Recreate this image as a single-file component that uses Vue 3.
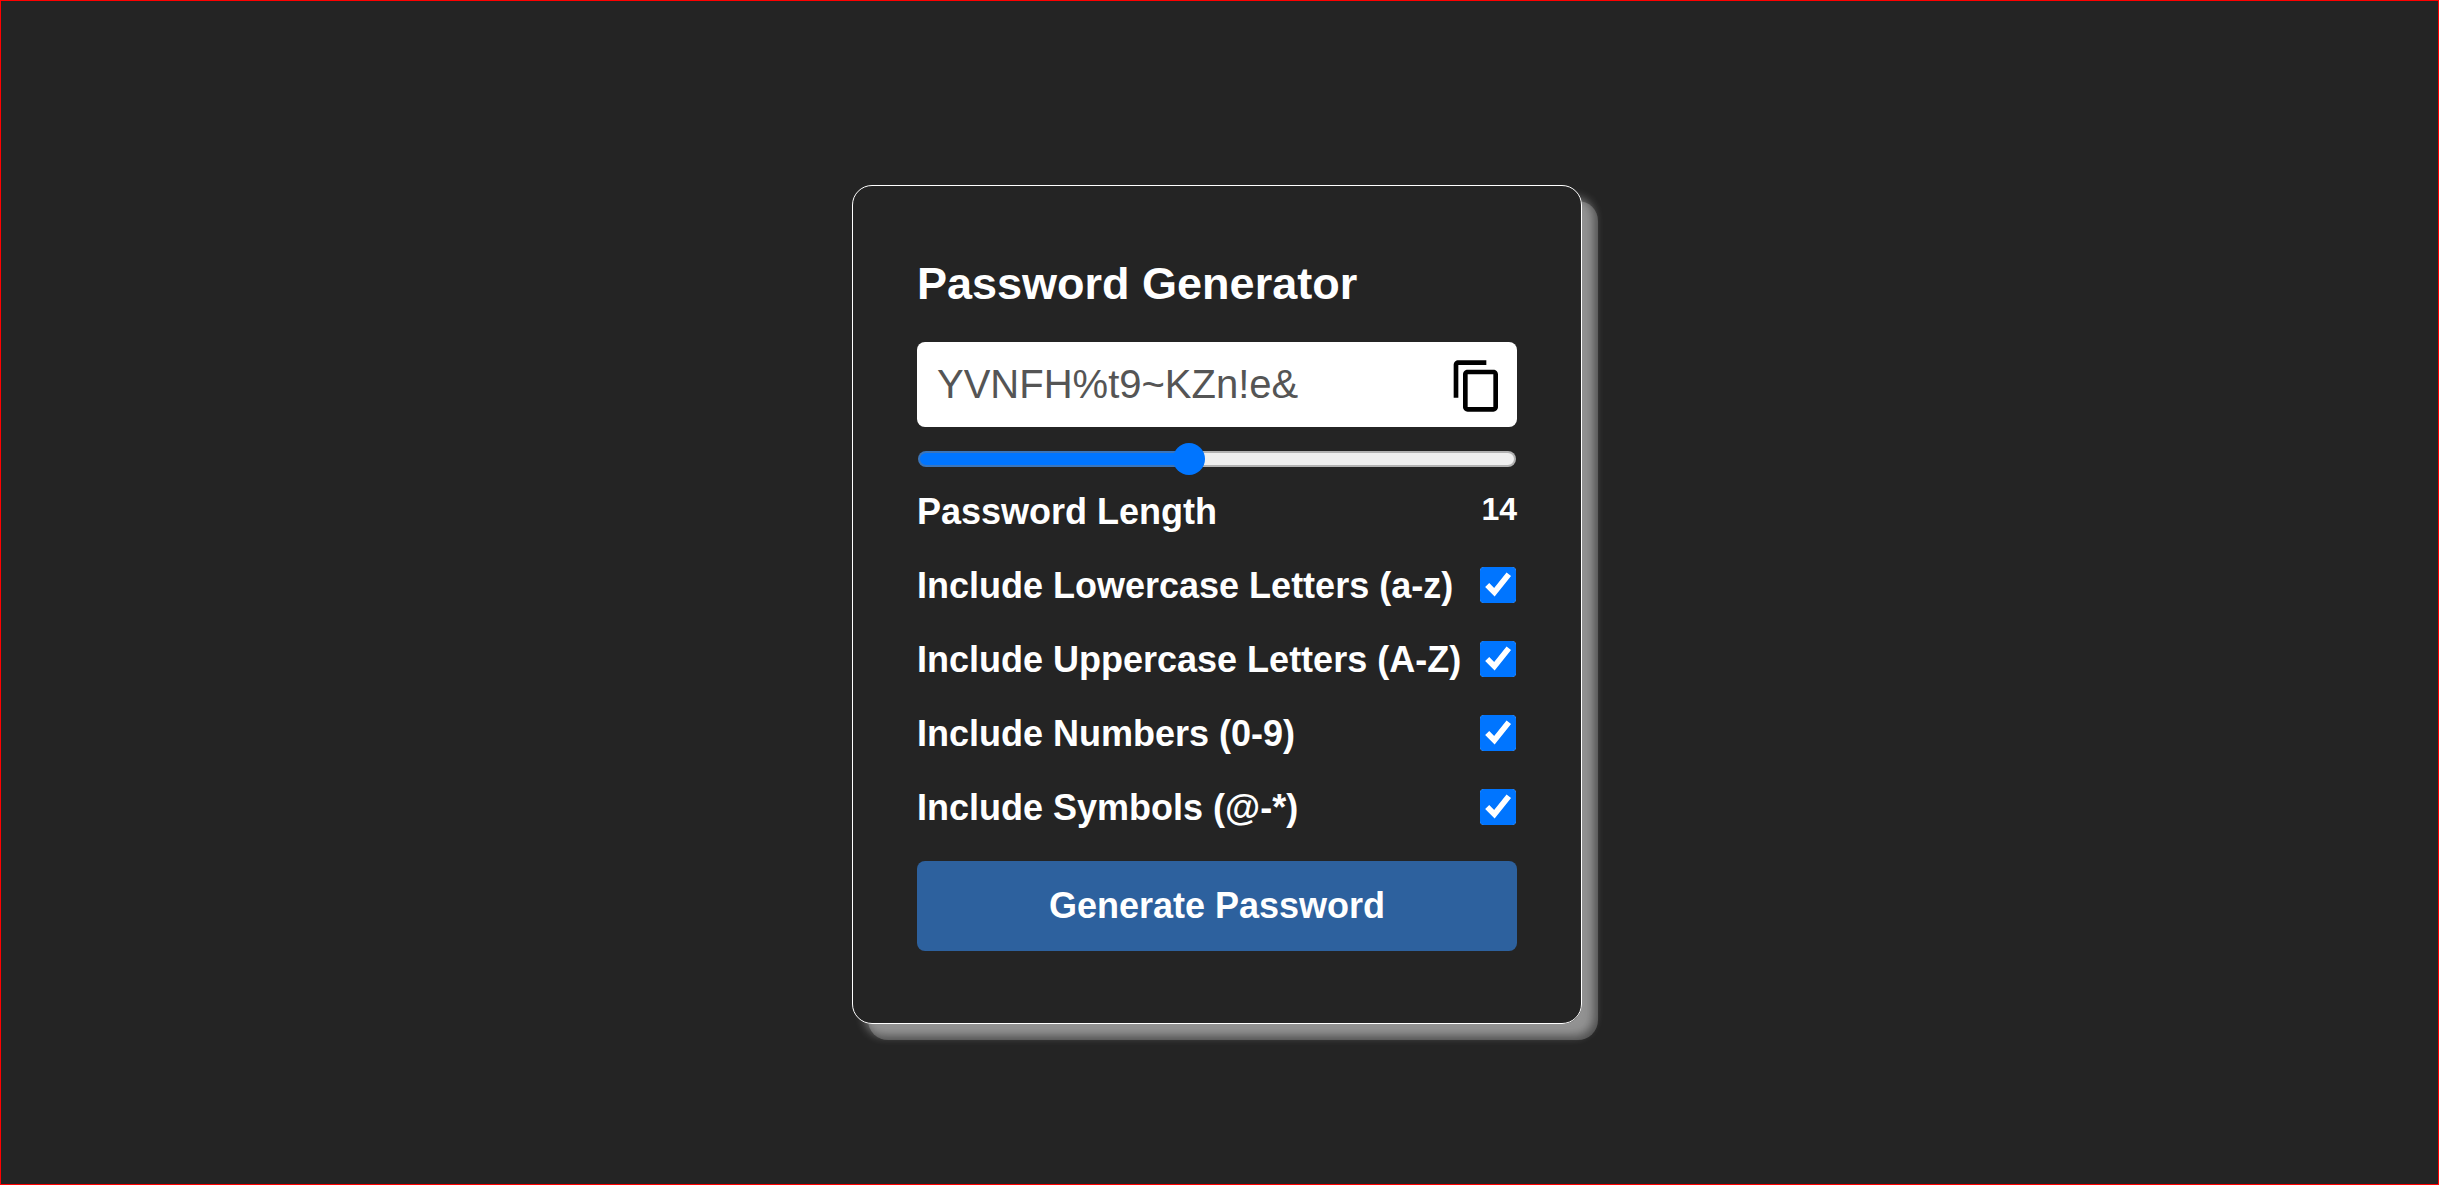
<script setup>
import { computed, reactive, ref } from 'vue'

const MIN = 5
const MAX = 25
const length = ref(14)
const password = ref('YVNFH%t9~KZn!e&')

const options = reactive([
  { id: 'lowercase', label: 'Include Lowercase Letters (a-z)', chars: 'abcdefghijklmnopqrstuvwxyz', on: true },
  { id: 'uppercase', label: 'Include Uppercase Letters (A-Z)', chars: 'ABCDEFGHIJKLMNOPQRSTUVWXYZ', on: true },
  { id: 'numbers', label: 'Include Numbers (0-9)', chars: '0123456789', on: true },
  { id: 'symbols', label: 'Include Symbols (@-*)', chars: '!@#$%^&*~-_+=', on: true },
])

const fill = computed(() => ((length.value - MIN) / (MAX - MIN)) * 100 + '%')

function generate() {
  const pool = options.filter((o) => o.on).map((o) => o.chars).join('')
  let result = ''
  for (let i = 0; pool && i < length.value; i++) {
    result += pool[Math.floor(Math.random() * pool.length)]
  }
  password.value = result
}

function copy() {
  navigator.clipboard?.writeText(password.value)
}
</script>

<template>
  <main class="page">
    <section class="card">
      <h1 class="title">Password Generator</h1>
      <div class="field">
        <input v-model="password" class="password" type="text" readonly aria-label="Generated password" />
        <button class="copy" type="button" aria-label="Copy password" @click="copy">
          <svg viewBox="0 0 24 24" width="56" height="56" fill="currentColor">
            <path d="M16 1H4c-1.1 0-2 .9-2 2v14h2V3h12V1zm3 4H8c-1.1 0-2 .9-2 2v14c0 1.1.9 2 2 2h11c1.1 0 2-.9 2-2V7c0-1.1-.9-2-2-2zm0 16H8V7h11v14z" />
          </svg>
        </button>
      </div>
      <input
        id="length"
        v-model.number="length"
        class="slider"
        type="range"
        :min="MIN"
        :max="MAX"
        :style="{ '--fill': fill }"
      />
      <div class="row length-row">
        <label for="length">Password Length</label>
        <output class="count" for="length">{{ length }}</output>
      </div>
      <div v-for="option in options" :key="option.id" class="row">
        <label :for="option.id">{{ option.label }}</label>
        <input :id="option.id" v-model="option.on" class="check" type="checkbox" />
      </div>
      <button class="generate" type="button" @click="generate">Generate Password</button>
    </section>
  </main>
</template>

<style>
body {
  background: #242424;
}
</style>

<style scoped>
.page {
  box-sizing: border-box;
  min-height: 100vh;
  padding: 24px 5px 0 0;
  border: 1px solid #f00;
  display: flex;
  align-items: center;
  justify-content: center;
  background: #242424;
  color: #fff;
  font-family: "Liberation Sans", Arial, sans-serif;
}

.card {
  box-sizing: border-box;
  width: 100%;
  max-width: 730px;
  padding: 72px 64px;
  border: 1px solid #fff;
  border-radius: 20px;
  display: flex;
  flex-direction: column;
  box-shadow:
    16px 16px 0 rgba(255, 255, 255, 0.2),
    12px 12px 10px rgba(255, 255, 255, 0.38);
}

.title {
  margin: 0 0 32px;
  font-size: 45px;
  line-height: 52px;
  font-weight: 700;
}

.field {
  display: flex;
  align-items: center;
  height: 85px;
  border-radius: 8px;
  background: #fff;
}

.password {
  flex: 1;
  min-width: 0;
  padding: 0 0 2px 20px;
  border: 0;
  background: none;
  color: #555;
  font: 40px/48px "Liberation Sans", Arial, sans-serif;
  outline: none;
}

.copy {
  display: flex;
  padding: 2px 0 0;
  margin-right: 12px;
  border: 0;
  background: none;
  color: #000;
  cursor: pointer;
}

.slider {
  appearance: none;
  width: calc(100% - 2px);
  height: 32px;
  margin: 16px 1px;
  background: none;
}

.slider::-webkit-slider-runnable-track {
  box-sizing: border-box;
  height: 16px;
  border: 2px solid rgba(118, 118, 118, 0.5);
  border-radius: 8px;
  background: linear-gradient(to right, #0075ff var(--fill), #efefef var(--fill)) border-box;
}

.slider::-webkit-slider-thumb {
  appearance: none;
  width: 32px;
  height: 32px;
  margin-top: -10px;
  border-radius: 50%;
  background: #0075ff;
}

.row {
  display: flex;
  align-items: center;
  justify-content: space-between;
  height: 42px;
  margin-bottom: 32px;
  font-size: 36px;
  line-height: 42px;
  font-weight: 700;
}

.length-row {
  align-items: flex-start;
}

.count {
  font-size: 32px;
  line-height: 36px;
}

.check {
  width: 36px;
  height: 36px;
  margin: 0 1px 2px 0;
  accent-color: #0075ff;
  clip-path: inset(0 round 4px);
}

.generate {
  height: 90px;
  border: 0;
  border-radius: 8px;
  background: #2d619e;
  color: #fff;
  font: 700 36px/42px "Liberation Sans", Arial, sans-serif;
  cursor: pointer;
}
</style>
